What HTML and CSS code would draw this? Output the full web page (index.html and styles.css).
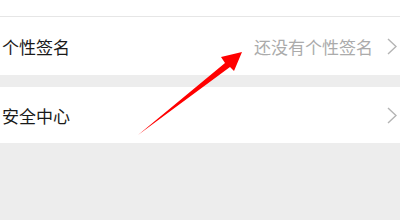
FILE: index.html
```html
<html>
    <head>
        <title>个人信息</title>
        <link rel="stylesheet" href="styles.css">
    </head>
    <body>
        <div class="top"></div>
        <div class="group first">
            <div class="row sign">
                <span class="label">个性签名</span>
                <span class="value">还没有个性签名</span>
                <svg class="chevron" width="10" height="17" viewBox="0 0 10 17"><path d="M1 1 L9 8.5 L1 16" fill="none" stroke="#b4b4b4" stroke-width="1.4"/></svg>
            </div>
        </div>
        <div class="group">
            <div class="row safe">
                <span class="label">安全中心</span>
                <span class="value"></span>
                <svg class="chevron" width="10" height="17" viewBox="0 0 10 17"><path d="M1 1 L9 8.5 L1 16" fill="none" stroke="#b4b4b4" stroke-width="1.4"/></svg>
            </div>
        </div>
        <!-- annotation arrow -->
        <svg class="arrow" width="400" height="220" viewBox="0 0 400 220">
            <path d="M138 135 L225 63 L221 57 L242 52 L234 71 L230 67 Z" fill="#ff0000"/>
        </svg>
    </body>
</html>
```

FILE: styles.css
```css
body{
    margin: 0;
    background: #ededed;
    font-family: "Noto Sans CJK SC", "Noto Sans", sans-serif;
    position: relative;
    width: 400px;
    height: 220px;
    overflow: hidden;
}
.top{
    height: 16px;
    background: #fff;
}
.group{
    background: #fff;
}
.group.first{
    border-top: 1px solid #e6e6e6;
    margin-bottom: 12px;
}
.row{
    display: flex;
    align-items: center;
    padding: 0 3px 0 2px;
}
.row.sign{
    height: 58px;
}
.row.safe{
    height: 56px;
}
.label{
    font-size: 17px;
    color: #1a1a1a;
    flex: 1;
}
.value{
    font-size: 17px;
    color: #ababab;
    margin-right: 14px;
}
.chevron{
    display: block;
}
.arrow{
    position: absolute;
    left: 0;
    top: 0;
}
```
